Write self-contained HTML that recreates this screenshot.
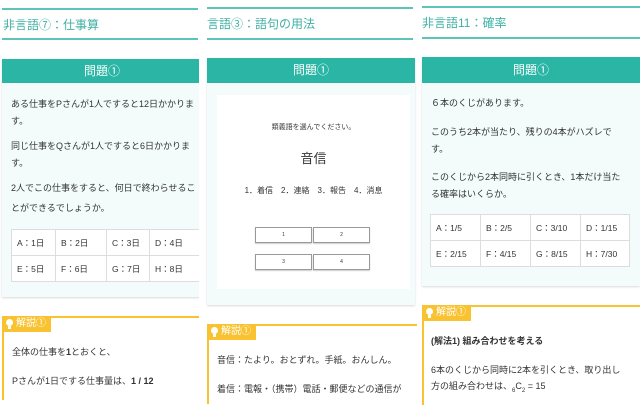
<!DOCTYPE html>
<html><head><meta charset="utf-8"><style>
*{margin:0;padding:0;box-sizing:border-box}
body{width:640px;height:400px;overflow:hidden;background:#fff;font-family:"Liberation Sans","Noto Sans CJK JP",sans-serif;color:#333;position:relative}
.a{position:absolute}
.c1{position:absolute;left:0;top:0;width:199px;height:400px;overflow:hidden}
.line{position:absolute;height:2px;background:#5cc4b8}
.ttl{position:absolute;color:#3fb1a4;font-size:12px;white-space:nowrap}
.hd{position:absolute;background:#2bb5a5;color:#fff;font-size:12px;text-align:center}
.bd{position:absolute;background:#f3fbfb;box-shadow:0 1px 2px rgba(0,0,0,.15)}
.t{position:absolute;font-size:9px;white-space:nowrap;color:#333}
table{position:absolute;border-collapse:collapse;background:#fff}
td{border:1px solid #ddd;font-size:8.5px;padding:0 0 0 5px;height:26px;color:#333;white-space:nowrap}
.ex{position:absolute;border:2px solid #f9c230;border-right:none;border-bottom:none;background:#fff}
.lb{position:absolute;background:#f9c230;color:#fff;font-size:10px;height:16px;line-height:16px;padding-left:14px;white-space:nowrap}
.lb:before{content:"";position:absolute;left:4px;top:3px;width:7px;height:7px;border-radius:50%;background:#fff}
.lb:after{content:"";position:absolute;left:6px;top:10px;width:3px;height:3px;background:#fff}
.bt{position:absolute;border:1px solid #999;background:#fff;font-size:5px;text-align:center;line-height:14px;box-shadow:0 1px 1px rgba(0,0,0,.2)}
</style></head><body>
<div class="c1">
<div class="line" style="left:2px;top:8px;width:196px"></div>
<div class="ttl" style="left:3px;top:16px">非言語⑦：仕事算</div>
<div class="line" style="left:2px;top:38px;width:196px"></div>
<div class="bd" style="left:2px;top:59px;width:200px;height:238px"></div>
<div class="hd" style="left:2px;top:59px;width:200px;height:24px;line-height:24px">問題①</div>
<div class="t" style="left:11px;top:97px">ある仕事をPさんが1人ですると12日かかりま</div>
<div class="t" style="left:11px;top:114px">す。</div>
<div class="t" style="left:11px;top:139px">同じ仕事をQさんが1人ですると6日かかりま</div>
<div class="t" style="left:11px;top:156px">す。</div>
<div class="t" style="left:11px;top:181px">2人でこの仕事をすると、何日で終わらせるこ</div>
<div class="t" style="left:11px;top:201px">とができるでしょうか。</div>
<table style="left:11px;top:229px;width:200px"><tr><td style="width:44px">A：1日</td><td style="width:51px">B：2日</td><td style="width:43px">C：3日</td><td>D：4日</td></tr><tr><td>E：5日</td><td>F：6日</td><td>G：7日</td><td>H：8日</td></tr></table>
<div class="ex" style="left:2px;top:316px;width:200px;height:90px"></div>
<div class="lb" style="left:2px;top:316px;width:49px">解説①</div>
<div class="t" style="left:12px;top:345px">全体の仕事を<b>1</b>とおくと、</div>
<div class="t" style="left:12px;top:374px">Pさんが1日でする仕事量は、<b>1 / 12</b></div>
</div>
<!-- col2 -->
<div class="line" style="left:207px;top:7px;width:206px"></div>
<div class="ttl" style="left:207px;top:15px">言語③：語句の用法</div>
<div class="line" style="left:207px;top:38px;width:206px"></div>
<div class="bd" style="left:207px;top:58px;width:208px;height:247px"></div>
<div class="hd" style="left:207px;top:58px;width:208px;height:25px;line-height:25px">問題①</div>
<div class="a" style="left:217px;top:95px;width:193px;height:194px;background:#fff"></div>
<div class="t" style="left:217px;top:122px;width:193px;text-align:center;font-size:7px">類義語を選んでください。</div>
<div class="t" style="left:217px;top:148px;width:193px;text-align:center;font-size:13px">音信</div>
<div class="t" style="left:217px;top:185px;width:193px;text-align:center;font-size:8px">1．着信　2．連絡　3．報告　4．消息</div>
<div class="bt" style="left:255px;top:227px;width:57px;height:16px">1</div>
<div class="bt" style="left:313px;top:227px;width:57px;height:16px">2</div>
<div class="bt" style="left:255px;top:254px;width:57px;height:16px">3</div>
<div class="bt" style="left:313px;top:254px;width:57px;height:16px">4</div>
<div class="ex" style="left:207px;top:324px;width:210px;height:80px"></div>
<div class="lb" style="left:207px;top:324px;width:49px">解説①</div>
<div class="t" style="left:217px;top:353px">音信：たより。おとずれ。手紙。おんしん。</div>
<div class="t" style="left:217px;top:382px">着信：電報・（携帯）電話・郵便などの通信が</div>
<!-- col3 -->
<div class="line" style="left:422px;top:6px;width:218px"></div>
<div class="ttl" style="left:422px;top:14px">非言語11：確率</div>
<div class="line" style="left:422px;top:37px;width:218px"></div>
<div class="bd" style="left:422px;top:57px;width:218px;height:229px"></div>
<div class="hd" style="left:422px;top:57px;width:218px;height:26px;line-height:26px">問題①</div>
<div class="t" style="left:431px;top:96px">６本のくじがあります。</div>
<div class="t" style="left:431px;top:125px">このうち2本が当たり、残りの4本がハズレで</div>
<div class="t" style="left:431px;top:142px">す。</div>
<div class="t" style="left:431px;top:170px">このくじから2本同時に引くとき、1本だけ当た</div>
<div class="t" style="left:431px;top:187px">る確率はいくらか。</div>
<table style="left:430px;top:214px;width:200px"><tr><td style="width:50px">A：1/5</td><td style="width:50px">B：2/5</td><td style="width:50px">C：3/10</td><td>D：1/15</td></tr><tr><td>E：2/15</td><td>F：4/15</td><td>G：8/15</td><td>H：7/30</td></tr></table>
<div class="ex" style="left:422px;top:305px;width:220px;height:100px;border-right:2px solid #f9c230"></div>
<div class="lb" style="left:422px;top:305px;width:49px">解説①</div>
<div class="t" style="left:431px;top:334px;font-weight:bold">(解法1) 組み合わせを考える</div>
<div class="t" style="left:431px;top:363px">6本のくじから同時に2本を引くとき、取り出し</div>
<div class="t" style="left:431px;top:379px">方の組み合わせは、<sub style="font-size:6px">6</sub>C<sub style="font-size:6px">2</sub> = 15</div>
</body></html>
